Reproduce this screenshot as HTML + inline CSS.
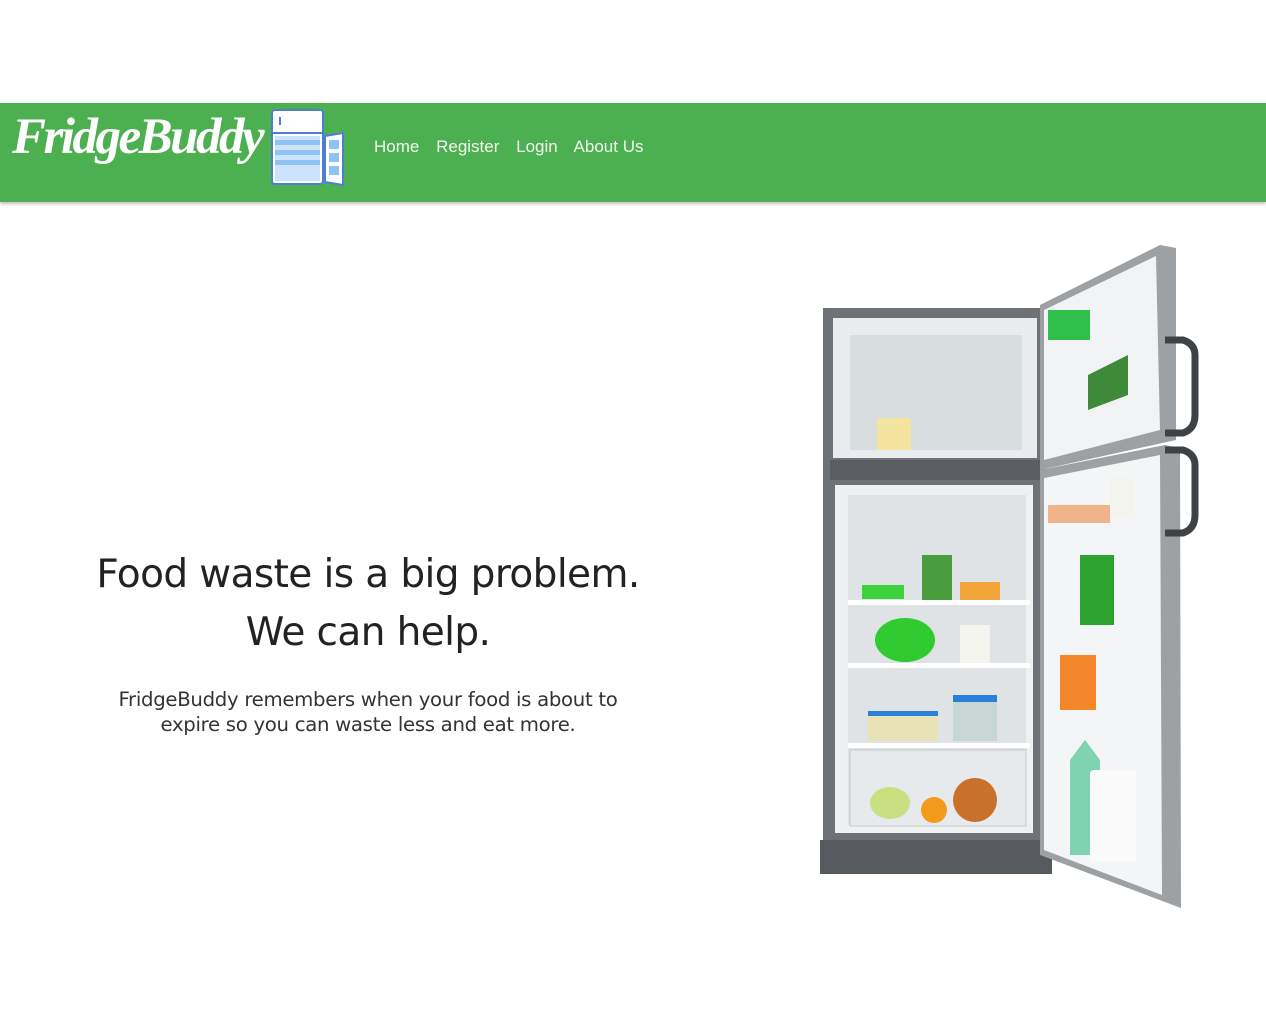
<!DOCTYPE html>
<html><head><meta charset="utf-8"><style>
body{margin:0;background:#fff;width:1266px;height:1027px;overflow:hidden;font-family:"Liberation Sans",sans-serif;position:relative}
.nav{position:absolute;top:103px;left:0;width:1266px;height:99px;background:#4caf50;box-shadow:0 2px 3px rgba(0,0,0,.25)}
.logo{position:absolute;left:12px;top:108px;font-family:"Liberation Serif",serif;font-style:italic;font-weight:bold;font-size:51px;color:#fff;letter-spacing:-2.5px}
.links{position:absolute;left:374px;top:137px;font-size:17px;color:#f2f8f0}
.links span{margin-right:12px}
h1{position:absolute;left:68px;width:600px;top:546px;margin:0;text-align:center;font-weight:normal;font-size:39px;line-height:58px;color:#222;font-family:"DejaVu Sans",sans-serif;letter-spacing:-.6px}
p{position:absolute;left:68px;width:600px;top:687px;margin:0;text-align:center;font-size:19.7px;line-height:25px;color:#333;font-family:"DejaVu Sans",sans-serif;letter-spacing:-.3px}
</style></head><body>
<div class="nav"></div>
<div class="logo">FridgeBuddy</div>
<svg style="position:absolute;left:270px;top:108px" width="76" height="80">
<rect x="2" y="2" width="51" height="74" rx="3" fill="#fff" stroke="#4a7fd4" stroke-width="2"/>
<line x1="2" y1="25" x2="53" y2="25" stroke="#4a7fd4" stroke-width="2"/>
<line x1="10" y1="9" x2="10" y2="17" stroke="#4a7fd4" stroke-width="2"/>
<rect x="5" y="28" width="45" height="45" fill="#cde3fb"/>
<rect x="5" y="32" width="45" height="5" fill="#90c3f5"/><rect x="5" y="42" width="45" height="5" fill="#90c3f5"/><rect x="5" y="52" width="45" height="5" fill="#90c3f5"/>
<polygon points="55,28 73,25 73,77 55,74" fill="#fff" stroke="#4a7fd4" stroke-width="2"/>
<rect x="59" y="32" width="10" height="9" fill="#90c3f5"/><rect x="59" y="45" width="10" height="9" fill="#90c3f5"/><rect x="59" y="58" width="10" height="9" fill="#90c3f5"/>
</svg>
<div class="links"><span>Home</span> <span>Register</span> <span>Login</span> <span>About Us</span></div>
<h1>Food waste is a big problem.<br>We can help.</h1>
<p>FridgeBuddy remembers when your food is about to<br>expire so you can waste less and eat more.</p>
<svg style="position:absolute;left:0;top:0" width="1266" height="1027">
<rect x="823" y="308" width="222" height="560" fill="#6e7175"/>
<rect x="833" y="318" width="204" height="140" fill="#e9ecee"/>
<rect x="850" y="335" width="172" height="115" fill="#d8dde0"/>
<rect x="877" y="418" width="34" height="32" fill="#f3e4a0"/>
<rect x="830" y="460" width="210" height="20" fill="#5a5d61"/>
<rect x="835" y="485" width="198" height="348" fill="#eef0f2"/>
<rect x="848" y="495" width="178" height="330" fill="#dfe3e6"/>
<rect x="848" y="600" width="182" height="5" fill="#fff"/>
<rect x="848" y="663" width="182" height="5" fill="#fff"/>
<rect x="848" y="743" width="182" height="5" fill="#fff"/>
<rect x="922" y="555" width="30" height="45" fill="#4a9d3f"/>
<rect x="960" y="582" width="40" height="18" fill="#f1a53b"/>
<rect x="862" y="585" width="42" height="14" fill="#3dd33d"/>
<ellipse cx="905" cy="640" rx="30" ry="22" fill="#2fcb2f"/>
<rect x="960" y="625" width="30" height="38" fill="#f5f5f0"/>
<rect x="868" y="713" width="70" height="28" fill="#e8e2b8"/>
<rect x="868" y="711" width="70" height="5" fill="#2c7fd6"/>
<rect x="953" y="697" width="44" height="44" fill="#c7d7d4"/>
<rect x="953" y="695" width="44" height="7" fill="#2c7fd6"/>
<rect x="850" y="750" width="176" height="76" fill="#e6eaec" stroke="#c6cacc"/>
<ellipse cx="890" cy="803" rx="20" ry="16" fill="#c8e080"/>
<circle cx="934" cy="810" r="13" fill="#f39a1a"/>
<ellipse cx="975" cy="800" rx="22" ry="22" fill="#c8712b"/>
<rect x="820" y="840" width="232" height="34" fill="#56595d"/>
<polygon points="1040,305 1160,245 1176,248 1176,440 1040,470" fill="#9da1a4"/>
<polygon points="1044,310 1156,256 1160,430 1044,460" fill="#f1f3f4"/>
<rect x="1048" y="310" width="42" height="30" fill="#2ec04a"/>
<polygon points="1088,375 1128,355 1128,395 1088,410" fill="#3e8a3a"/>
<polygon points="1040,470 1165,445 1180,448 1181,908 1040,855" fill="#9da1a4"/>
<polygon points="1044,478 1160,455 1162,895 1044,850" fill="#f3f5f6"/>
<rect x="1048" y="505" width="62" height="18" fill="#f1b48a"/>
<rect x="1110" y="478" width="24" height="40" fill="#f4f4ef"/>
<rect x="1080" y="555" width="34" height="70" fill="#2ea22e"/>
<rect x="1060" y="655" width="36" height="55" fill="#f4862a"/>
<polygon points="1070,760 1085,740 1100,760 1100,855 1070,855" fill="#7fd3b1"/>
<rect x="1090" y="770" width="46" height="92" rx="4" fill="#fafafa"/>
<path d="M1165,340 h18 q12,4 12,15 v60 q0,14 -12,18 h-18" fill="none" stroke="#3e4246" stroke-width="7"/>
<path d="M1165,450 h18 q12,4 12,15 v50 q0,14 -12,18 h-18" fill="none" stroke="#3e4246" stroke-width="7"/>
</svg>
</body></html>
